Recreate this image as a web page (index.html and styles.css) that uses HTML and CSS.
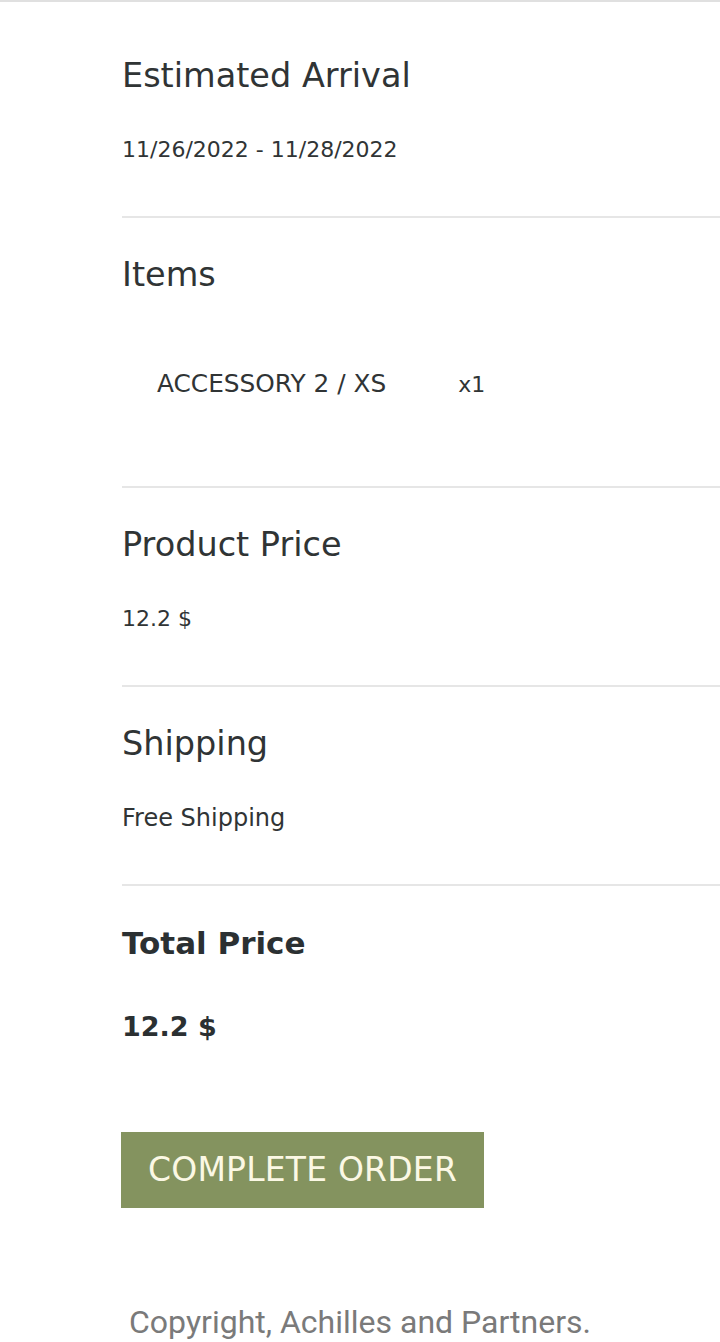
FILE: index.html
```html
<!DOCTYPE html>
<html lang="en">
<head>
<meta charset="utf-8">
<title>Order Summary</title>
<link rel="stylesheet" href="styles.css">
</head>
<body>
<main class="summary">
  <section class="block block-first">
    <h2 class="label">Estimated Arrival</h2>
    <p class="value value-date">11/26/2022 - 11/28/2022</p>
  </section>
  <section class="block">
    <h2 class="label">Items</h2>
    <div class="item">
      <span class="item-name">ACCESSORY 2 / XS</span>
      <span class="item-qty">x1</span>
    </div>
  </section>
  <section class="block">
    <h2 class="label">Product Price</h2>
    <p class="value value-num">12.2 $</p>
  </section>
  <section class="block">
    <h2 class="label">Shipping</h2>
    <p class="value">Free Shipping</p>
  </section>
  <section class="block block-total">
    <h2 class="label label-bold">Total Price</h2>
    <p class="total">12.2 $</p>
    <button class="btn" type="button">COMPLETE ORDER</button>
  </section>
</main>
<footer class="footer">Copyright, Achilles and Partners.</footer>
</body>
</html>
```
FILE: styles.css
```css
* { box-sizing: border-box; }
html, body { margin: 0; padding: 0; background: #ffffff; }
body {
  font-family: "DejaVu Sans", sans-serif;
  color: #303435;
  border-top: 2px solid #e0e0e0;
  overflow-x: hidden;
}
.summary {
  padding-left: 122px;
  display: flex;
  flex-direction: column;
}
.block {
  padding: 37px 0 52px;
  border-bottom: 2px solid #e6e6e6;
}
.block-first { padding-top: 54px; }
.block-total { border-bottom: none; padding-bottom: 0; }
.label {
  margin: 0;
  font-size: 33.5px;
  line-height: 40px;
  font-weight: 400;
}
.label-bold {
  font-weight: 700;
  font-size: 31px;
  color: #2b3032;
}
.value {
  margin: 40px 0 0;
  font-size: 24px;
  line-height: 28px;
}
.value-date { font-size: 22px; }
.value-num { font-size: 22px; }
.item {
  display: flex;
  align-items: baseline;
  gap: 72px;
  margin-top: 40px;
  padding: 35px 35px 35px;
}
.item-name {
  font-size: 24.8px;
  line-height: 28px;
}
.item-qty {
  font-size: 22px;
  line-height: 28px;
}
.total {
  margin: 47px 0 0;
  font-size: 27px;
  line-height: 34px;
  font-weight: 700;
  color: #2b3032;
}
.btn {
  display: inline-block;
  margin-top: 88px;
  margin-left: -1px;
  height: 76px;
  padding: 0 27px;
  border: none;
  border-radius: 0;
  background: #84935f;
  color: #fbf8e4;
  font-family: "DejaVu Sans", sans-serif;
  font-size: 33px;
  line-height: 76px;
  font-weight: 400;
  letter-spacing: 0.2px;
}
.footer {
  margin-top: 96px;
  text-align: center;
  font-family: Roboto, "Liberation Sans", sans-serif;
  font-size: 32px;
  line-height: 36px;
  color: #7a7a7a;
}
```
